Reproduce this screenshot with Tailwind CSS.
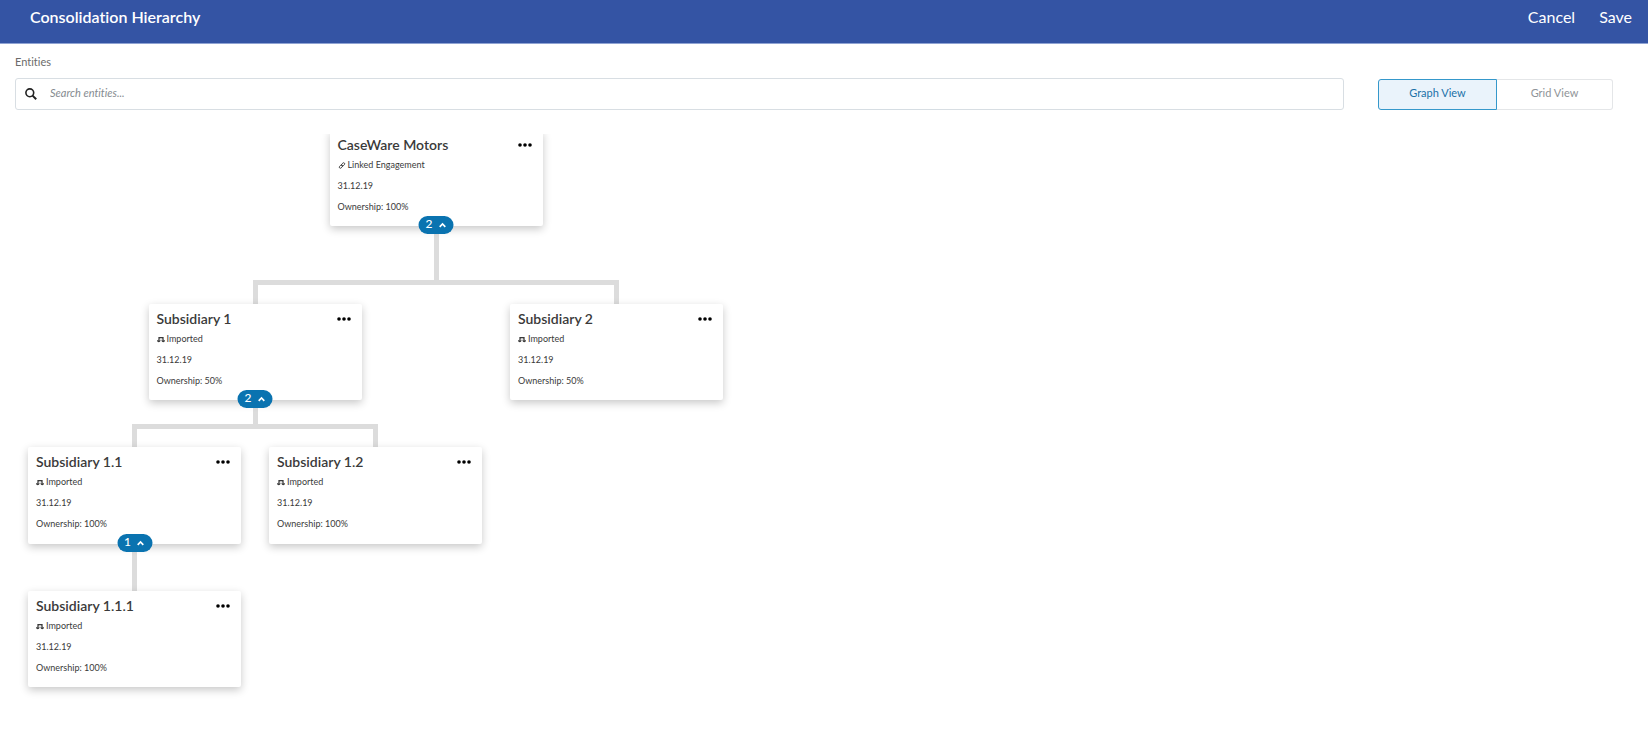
<!DOCTYPE html>
<html lang="en">
<head>
<meta charset="utf-8">
<meta name="viewport" content="width=device-width, initial-scale=1">
<title>Consolidation Hierarchy</title>
<script src="https://cdn.jsdelivr.net/npm/@tailwindcss/browser@4"></script>
</head>
<body class="min-h-screen bg-white font-['Lato',sans-serif] text-[#3a3a3a] [font-variant-ligatures:no-common-ligatures]">
<svg class="hidden" aria-hidden="true">
  <symbol id="dots" viewBox="0 0 14 4"><circle cx="2" cy="2" r="1.800"/><circle cx="7" cy="2" r="1.800"/><circle cx="12" cy="2" r="1.800"/></symbol>
  <symbol id="up" viewBox="0 0 8 6"><path d="M1.200 4.800 4 2l2.800 2.800" fill="none" stroke="currentColor" stroke-width="1.700"/></symbol>
  <symbol id="scale" viewBox="0 0 8 8"><path d="M1.500 2h5v1.300h-5z"/><path d="M2 2.500 1.300 5.500M2.200 2.500 2.900 5.500M5.800 2.500 5.100 5.500M6 2.500 6.700 5.500" fill="none" stroke="currentColor" stroke-width=".7"/><path d="M0 5.200h3.500c0 2.600-3.500 2.600-3.500 0zM4.500 5.200H8c0 2.600-3.500 2.600-3.500 0z"/></symbol>
  <symbol id="link" viewBox="0 0 8 8"><g fill="none" stroke="currentColor" stroke-width=".9" transform="rotate(-45 4 4.500)"><rect x=".6" y="3.400" width="3.800" height="2.200" rx="1.100"/><rect x="3.600" y="3.400" width="3.800" height="2.200" rx="1.100"/></g></symbol>
</svg>

<header class="flex h-11 items-start justify-between border-b border-[#8fa3d3] bg-[#3454a4] pr-4 pl-[30px] pt-[5px] text-white">
  <h1 class="text-base leading-6 font-semibold">Consolidation Hierarchy</h1>
  <div class="flex gap-6 text-base leading-6">
    <button type="button">Cancel</button>
    <button type="button">Save</button>
  </div>
</header>

<main>
  <div class="pt-2.5 pr-[35px] pl-[15px]">
    <label for="search" class="block text-[11px] leading-4 text-[#6b6b6b]">Entities</label>
    <div class="mt-[7px] flex items-center gap-[34px]">
      <div class="flex h-8 flex-1 items-center rounded-[3px] border border-[#d8dee3] bg-white pl-[9px]">
        <svg class="size-3 text-[#222]" viewBox="0 0 12 12" fill="none" stroke="currentColor" aria-hidden="true"><circle cx="4.800" cy="4.800" r="3.900" stroke-width="1.600"/><path d="m7.600 7.600 3.600 3.600" stroke-width="2"/></svg>
        <input id="search" type="text" placeholder="Search entities..." class="ml-[13px] h-full flex-1 pb-0.5 text-[11px] italic outline-none placeholder:text-[#858b90]">
      </div>
      <div class="mt-0.5 flex h-[31px] text-[11px]">
        <button type="button" aria-pressed="true" class="w-[119px] rounded-l-[3px] border border-[#3598cb] bg-[#eaf3fb] pb-0.5 text-[#1a71a8]">Graph View</button>
        <button type="button" aria-pressed="false" class="w-[116px] rounded-r-[3px] border border-l-0 border-[#e4e6e8] pb-0.5 text-[#8f9498]">Grid View</button>
      </div>
    </div>
  </div>

  <section aria-label="Entity graph" class="mt-6 flex overflow-hidden pb-10 pl-3.5">
    <div class="-mt-1 flex flex-col items-center">
      <div class="flex flex-col items-center pl-[121px]">
        <article class="relative h-24 w-[213px] rounded-[2px] bg-white px-2 pt-[5px] shadow-[0_3px_8px_rgba(0,0,0,0.22)]">
          <div class="flex items-center justify-between pr-[3px]"><h2 class="text-sm leading-5 font-semibold">CaseWare Motors</h2><button type="button" aria-label="Options for CaseWare Motors" class="text-black"><svg class="h-1 w-3.5" fill="currentColor"><use href="#dots"/></svg></button></div>
          <p class="flex items-center gap-0.5 text-[9px] leading-5"><svg class="size-2" fill="currentColor"><use href="#link"/></svg>Linked Engagement</p>
          <p class="text-[9px] leading-[22px]">31.12.19</p>
          <p class="text-[9px] leading-5">Ownership: 100%</p>
          <button type="button" aria-label="Collapse 2 children" class="absolute -bottom-2 left-1/2 z-10 flex h-[18px] w-[35px] -translate-x-1/2 items-center justify-center gap-1.5 rounded-full bg-[#0a73b0] pb-0.5 text-xs font-medium text-white">2<svg class="mt-0.5 h-1.5 w-2"><use href="#up"/></svg></button>
        </article>
        <div class="h-[54px] w-[5px] bg-[#dcdcdc]"></div>
      </div>
      <div class="flex items-start">

        <div class="flex flex-col items-center">
          <div class="flex h-6 w-full"><span class="flex-1"></span><span class="w-[5px] bg-[#dcdcdc]"></span><span class="h-[5px] flex-1 bg-[#dcdcdc]"></span></div>
          <article class="relative h-24 w-[213px] rounded-[2px] bg-white px-2 pt-[5px] shadow-[0_3px_8px_rgba(0,0,0,0.22)]">
            <div class="flex items-center justify-between pr-[3px]"><h2 class="text-sm leading-5 font-semibold">Subsidiary 1</h2><button type="button" aria-label="Options for Subsidiary 1" class="text-black"><svg class="h-1 w-3.5" fill="currentColor"><use href="#dots"/></svg></button></div>
            <p class="flex items-center gap-0.5 text-[9px] leading-5"><svg class="size-2" fill="currentColor"><use href="#scale"/></svg>Imported</p>
            <p class="text-[9px] leading-[22px]">31.12.19</p>
            <p class="text-[9px] leading-5">Ownership: 50%</p>
            <button type="button" aria-label="Collapse 2 children" class="absolute -bottom-2 left-1/2 z-10 flex h-[18px] w-[35px] -translate-x-1/2 items-center justify-center gap-1.5 rounded-full bg-[#0a73b0] pb-0.5 text-xs font-medium text-white">2<svg class="mt-0.5 h-1.5 w-2"><use href="#up"/></svg></button>
          </article>
          <div class="h-6 w-[5px] bg-[#dcdcdc]"></div>
          <div class="flex items-start">

            <div class="flex flex-col items-center">
              <div class="flex h-[23px] w-full"><span class="flex-1"></span><span class="w-[5px] bg-[#dcdcdc]"></span><span class="h-[5px] flex-1 bg-[#dcdcdc]"></span></div>
              <div class="flex flex-col items-center px-3.5">
                <article class="relative h-[97px] w-[213px] rounded-[2px] bg-white px-2 pt-[5px] shadow-[0_3px_8px_rgba(0,0,0,0.22)]">
                  <div class="flex items-center justify-between pr-[3px]"><h2 class="text-sm leading-5 font-semibold">Subsidiary 1.1</h2><button type="button" aria-label="Options for Subsidiary 1.1" class="text-black"><svg class="h-1 w-3.5" fill="currentColor"><use href="#dots"/></svg></button></div>
                  <p class="flex items-center gap-0.5 text-[9px] leading-5"><svg class="size-2" fill="currentColor"><use href="#scale"/></svg>Imported</p>
                  <p class="text-[9px] leading-[22px]">31.12.19</p>
                  <p class="text-[9px] leading-5">Ownership: 100%</p>
                  <button type="button" aria-label="Collapse 1 child" class="absolute -bottom-2 left-1/2 z-10 flex h-[18px] w-[35px] -translate-x-1/2 items-center justify-center gap-1.5 rounded-full bg-[#0a73b0] pb-0.5 text-xs font-medium text-white">1<svg class="mt-0.5 h-1.5 w-2"><use href="#up"/></svg></button>
                </article>
                <div class="h-[47px] w-[5px] bg-[#dcdcdc]"></div>
                <article class="relative h-24 w-[213px] rounded-[2px] bg-white px-2 pt-[5px] shadow-[0_3px_8px_rgba(0,0,0,0.22)]">
                  <div class="flex items-center justify-between pr-[3px]"><h2 class="text-sm leading-5 font-semibold">Subsidiary 1.1.1</h2><button type="button" aria-label="Options for Subsidiary 1.1.1" class="text-black"><svg class="h-1 w-3.5" fill="currentColor"><use href="#dots"/></svg></button></div>
                  <p class="flex items-center gap-0.5 text-[9px] leading-5"><svg class="size-2" fill="currentColor"><use href="#scale"/></svg>Imported</p>
                  <p class="text-[9px] leading-[22px]">31.12.19</p>
                  <p class="text-[9px] leading-5">Ownership: 100%</p>
                </article>
              </div>
            </div>

            <div class="flex flex-col items-center">
              <div class="flex h-[23px] w-full"><span class="h-[5px] flex-1 bg-[#dcdcdc]"></span><span class="w-[5px] bg-[#dcdcdc]"></span><span class="flex-1"></span></div>
              <div class="px-3.5">
                <article class="relative h-[97px] w-[213px] rounded-[2px] bg-white px-2 pt-[5px] shadow-[0_3px_8px_rgba(0,0,0,0.22)]">
                  <div class="flex items-center justify-between pr-[3px]"><h2 class="text-sm leading-5 font-semibold">Subsidiary 1.2</h2><button type="button" aria-label="Options for Subsidiary 1.2" class="text-black"><svg class="h-1 w-3.5" fill="currentColor"><use href="#dots"/></svg></button></div>
                  <p class="flex items-center gap-0.5 text-[9px] leading-5"><svg class="size-2" fill="currentColor"><use href="#scale"/></svg>Imported</p>
                  <p class="text-[9px] leading-[22px]">31.12.19</p>
                  <p class="text-[9px] leading-5">Ownership: 100%</p>
                </article>
              </div>
            </div>
          </div>
        </div>

        <div class="flex flex-col items-center">
          <div class="flex h-6 w-full"><span class="h-[5px] flex-1 bg-[#dcdcdc]"></span><span class="w-[5px] bg-[#dcdcdc]"></span><span class="flex-1"></span></div>
          <div class="px-3.5">
            <article class="relative h-24 w-[213px] rounded-[2px] bg-white px-2 pt-[5px] shadow-[0_3px_8px_rgba(0,0,0,0.22)]">
              <div class="flex items-center justify-between pr-[3px]"><h2 class="text-sm leading-5 font-semibold">Subsidiary 2</h2><button type="button" aria-label="Options for Subsidiary 2" class="text-black"><svg class="h-1 w-3.5" fill="currentColor"><use href="#dots"/></svg></button></div>
              <p class="flex items-center gap-0.5 text-[9px] leading-5"><svg class="size-2" fill="currentColor"><use href="#scale"/></svg>Imported</p>
              <p class="text-[9px] leading-[22px]">31.12.19</p>
              <p class="text-[9px] leading-5">Ownership: 50%</p>
            </article>
          </div>
        </div>
      </div>
    </div>
  </section>
</main>
</body>
</html>
